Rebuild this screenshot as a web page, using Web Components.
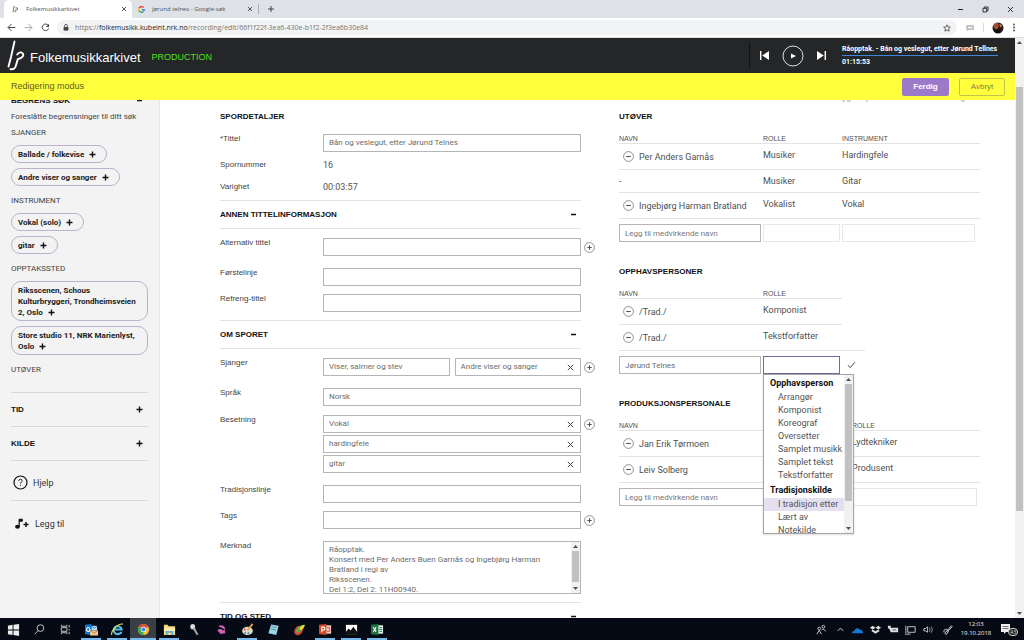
<!DOCTYPE html>
<html lang="nb">
<head>
<meta charset="utf-8">
<title>Folkemusikkarkivet</title>
<style>
html,body{margin:0;height:100%}
body{overflow:hidden;background:#fff;color:#444;font:8px/10px Roboto,"Liberation Sans",sans-serif}
</style>
</head>
<body>
<desktop-shell>
  <browser-tabs slot="top"></browser-tabs>
  <address-bar slot="top"></address-bar>
  <site-header slot="page"></site-header>
  <edit-bar slot="page"></edit-bar>
  <record-page slot="page"></record-page>
  <scroll-rail slot="rail" style="--before:40px;--thumb:424px"></scroll-rail>
  <task-bar slot="bottom"></task-bar>
</desktop-shell>

<script>
const base = `*{box-sizing:border-box}button{font:inherit;color:inherit;background:none;border:0;padding:0;margin:0;display:block}svg{display:block;flex:none}input,textarea{font:inherit;border-radius:0;outline:0}`;
function define(name, css, html, setup) {
  customElements.define(name, class extends HTMLElement {
    connectedCallback() {
      if (this.shadowRoot) return;
      const root = this.attachShadow({mode: 'open'});
      const body = typeof html === 'function' ? html(this) : html;
      root.innerHTML = `<style>${base}${css}</style>${body}`;
      if (setup) setup(root, this);
    }
  });
}
const attr = (el, n) => el.getAttribute(n) || '';
const plusSvg = '<svg width="7" height="7" viewBox="0 0 7 7" aria-hidden="true"><path d="M3.5 .5v6M.5 3.5h6" stroke="#111" stroke-width="1.4"/></svg>';
const minusSvg = '<svg width="7" height="7" viewBox="0 0 7 7" aria-hidden="true"><path d="M1 3.5h5" stroke="#111" stroke-width="1.5"/></svg>';
const circle = d => `<svg width="11" height="11" viewBox="0 0 11 11" aria-hidden="true"><circle cx="5.5" cy="5.5" r="4.9" fill="none" stroke="#777" stroke-width=".8"/><path d="${d}" stroke="#555" stroke-width="1.1"/></svg>`;
const circlePlus = circle('M5.5 3.3v4.4M3.3 5.5h4.4');
const circleMinus = circle('M3.2 5.5h4.6');

/* Frame: browser chrome on top, page with scroll rail, task bar below */
define('desktop-shell', `
:host{display:flex;flex-direction:column;height:100vh;min-height:0}
.view{flex:1;display:flex;min-height:0}
.page{flex:1;min-width:0;display:flex;flex-direction:column}
`, `<slot name="top"></slot><div class="view"><div class="page"><slot name="page"></slot></div><slot name="rail"></slot></div><slot name="bottom"></slot>`);

define('scroll-rail', `
:host{display:flex;flex-direction:column;width:9px;flex:none;background:#f1f1f1;justify-content:space-between}
.track{flex:1;padding-top:var(--before,0)}
.thumb{height:var(--thumb);background:#c1c1c1;margin:0 1px}
svg{margin:2px auto}
`, `<svg width="5" height="5" viewBox="0 0 5 5"><path d="M0 4l2.5-3L5 4z" fill="#505050"/></svg><div class="track"><div class="thumb"></div></div><svg width="5" height="5" viewBox="0 0 5 5"><path d="M0 1l2.5 3L5 1z" fill="#505050"/></svg>`);

define('browser-tabs', `
:host{display:flex;height:18px;background:#dee1e6;font:6px/18px "Open Sans",sans-serif;color:#4d5156;padding-left:4px}
.tab{display:flex;align-items:center;gap:7px;width:128px;padding:0 5px 0 8px}
.tab.on{background:#fff;border-radius:5px 5px 0 0}
.tab span{flex:1;white-space:nowrap}
.second{width:127px;border-right:1px solid #a9acb1;margin:4px 0;padding-left:6px}
.add{margin-left:8px;align-self:center}
.win{margin-left:auto;display:flex;align-items:center;gap:18px;padding-right:10px}
`, `<div class="tab on"><svg width="7" height="8" viewBox="0 0 7 8"><path d="M2.2.8L1 7.2M3.4 2.8q2.6-.4 2.2 1.2t-2 1l-.8 2.4" fill="none" stroke="#777" stroke-width="1"/></svg><span>Folkemusikkarkivet</span><button aria-label="Lukk fane"><svg width="6" height="6" viewBox="0 0 6 6"><path d="M1 1l4 4M5 1L1 5" stroke="#444" stroke-width=".9"/></svg></button></div>
<div class="tab second"><svg width="7" height="7" viewBox="0 0 8 8" fill="none" stroke-width="1.5"><path d="M6.4 1.8A3.2 3.2 0 0 0 1.2 2.6" stroke="#ea4335"/><path d="M1.2 2.6a3.2 3.2 0 0 0 0 2.8" stroke="#fbbc05"/><path d="M1.2 5.4a3.2 3.2 0 0 0 5 .9" stroke="#34a853"/><path d="M6.2 6.3Q7.2 5.4 7.2 4.1H4.2" stroke="#4285f4"/></svg><span>jørund telnes - Google-søk</span><button aria-label="Lukk fane"><svg width="6" height="6" viewBox="0 0 6 6"><path d="M1 1l4 4M5 1L1 5" stroke="#444" stroke-width=".9"/></svg></button></div>
<button class="add" aria-label="Ny fane"><svg width="8" height="8" viewBox="0 0 8 8"><path d="M4 1v6M1 4h6" stroke="#444"/></svg></button>
<div class="win"><button aria-label="Minimer"><svg width="7" height="7" viewBox="0 0 7 7"><path d="M1 3.5h5" stroke="#222"/></svg></button><button aria-label="Gjenopprett"><svg width="7" height="7" viewBox="0 0 7 7" fill="none" stroke="#222" stroke-width=".9"><path d="M1 2.3h3.7V6H1zM2.3 2.2V1H6v3.7H4.8"/></svg></button><button aria-label="Lukk"><svg width="7" height="7" viewBox="0 0 7 7"><path d="M1 1l5 5M6 1L1 6" stroke="#222" stroke-width=".9"/></svg></button></div>`);

define('address-bar', `
:host{display:flex;box-sizing:border-box;align-items:center;height:20px;background:#fff;padding:0 8px 0 7px;border-bottom:1px solid #ddd}
.nav{display:flex;gap:8px;margin-right:7px}
.url{flex:1;display:flex;align-items:center;gap:6px;height:15px;border-radius:8px;background:#f1f3f4;padding:0 6px;color:#777;font:7px/15px "Open Sans",sans-serif;white-space:nowrap}
.url b{font-weight:400;color:#222}.url span{flex:1}
.tools{display:flex;align-items:center;gap:8px;margin-left:8px}
.line{width:1px;height:9px;background:#d5dbe3}
`, `<div class="nav">
<button aria-label="Tilbake"><svg width="9" height="9" viewBox="0 0 9 9" fill="none" stroke="#444"><path d="M8.3 4.5H1.2M4.5 1L1 4.5 4.5 8"/></svg></button>
<button aria-label="Frem"><svg width="9" height="9" viewBox="0 0 9 9" fill="none" stroke="#aaa"><path d="M.7 4.5h7.1M4.5 1L8 4.5 4.5 8"/></svg></button>
<button aria-label="Last inn på nytt"><svg width="9" height="9" viewBox="0 0 9 9"><path d="M7.4 2.6A3.3 3.3 0 1 0 7.7 5.4" fill="none" stroke="#444"/><path d="M8 .8v3.1H4.9z" fill="#444"/></svg></button></div>
<div class="url"><svg width="6" height="7" viewBox="0 0 6 7"><path d="M.6 3h4.8v3.6H.6z" fill="#444"/><path d="M1.6 3V1.8a1.4 1.4 0 0 1 2.8 0V3" fill="none" stroke="#444" stroke-width=".8"/></svg><span>https://<b>folkemusikk.kubeint.nrk.no</b>/recording/edit/66f1f22f-3ea6-430e-b1f2-2f3ea6b30e84</span>
<button aria-label="Bokmerke"><svg width="8" height="8" viewBox="0 0 10 10"><path d="M5 1l1.2 2.7 3 .3-2.3 2 .7 3L5 7.5 2.4 9l.7-3L.8 4l3-.3z" fill="none" stroke="#444"/></svg></button></div>
<div class="tools"><svg width="10" height="8" viewBox="0 0 10 8"><path d="M1 2q0-1 1-1h6q1 0 1 1v3q0 1-1 1H4L2 7.5V6Q1 6 1 5z" fill="#c4c4c4"/><path d="M3 3.5h4" stroke="#fff"/></svg><span class="line"></span><svg width="12" height="12" viewBox="0 0 12 12"><circle cx="6" cy="6" r="5.5" fill="#2b1710"/><path d="M1 4q2-4 5-3l1 4-3 3z" fill="#a5532f"/><path d="M7 2l3 1-1 3z" fill="#c98a63"/><path d="M2 8l5-1 1 4H5z" fill="#0c0c10"/></svg><button aria-label="Meny"><svg width="4" height="9" viewBox="0 0 4 9" fill="#444"><circle cx="2" cy="1.5" r=".9"/><circle cx="2" cy="4.5" r=".9"/><circle cx="2" cy="7.5" r=".9"/></svg></button></div>`);

define('site-header', `
:host{display:flex;align-items:center;height:35px;flex:none;background:#252628;color:#fff;padding:0 17px 0 7px}
a{display:flex;align-items:center;gap:5px;color:inherit;text-decoration:none;font:13px/35px "Liberation Sans",sans-serif}
a span{padding-top:4px}
.env{margin-left:11px;padding-top:3px;color:#4ee01c;font:9px/35px "Liberation Sans",sans-serif}
.player{margin-left:auto;display:flex;align-items:center;gap:12px;height:27px;border-left:1px solid #111;padding-left:9px}
.now{width:156px;margin-left:3px;font:700 7px/11px Roboto,sans-serif;white-space:nowrap}
.now p{margin:0}.now p:first-child{border-bottom:1px solid #3f86d8}.now p:last-child{padding-top:1px}
`, `<a href="#"><svg width="18" height="31" viewBox="0 0 18 31" fill="none" stroke="#fff" stroke-width="1.9" stroke-linecap="round" stroke-linejoin="round"><path d="M7.5 1.5L4 17 1.500 26.500"/><path d="M10.2 14.500Q12 11.800 14.500 12.500 17.200 13.800 15.800 16.300 14.200 18.400 10.800 19.200L8.600 26.500Q7.300 29.800 3.500 29.200"/></svg><span>Folkemusikkarkivet</span></a><span class="env">PRODUCTION</span>
<div class="player"><button aria-label="Forrige"><svg width="11" height="11" viewBox="0 0 11 11" fill="#fff"><path d="M1 1h1.4v9H1zM10 1v9L3.2 5.5z"/></svg></button>
<button aria-label="Spill av"><svg width="22" height="22" viewBox="0 0 22 22"><circle cx="11" cy="11" r="10" fill="none" stroke="#ddd"/><path d="M9 8.400v5.200L14 11z" fill="#fff"/></svg></button>
<button aria-label="Neste"><svg width="11" height="11" viewBox="0 0 11 11" fill="#fff"><path d="M8.600 1H10v9H8.600zM1 1v9l6.800-4.500z"/></svg></button>
<div class="now"><p>Råopptak. - Bån og veslegut, etter Jørund Tellnes</p><p>01:15:53</p></div></div>`);

define('edit-bar', `
:host{display:flex;align-items:center;height:27px;flex:none;background:#ffff3e;color:#5e5e20;padding:0 10px 0 11px;font:9px/17px "Liberation Sans",sans-serif}
span{flex:1}
button{height:18px;width:47px;border-radius:2px;border:1px solid #9b7bc9;background:#9b7bc9;color:#fff;font:700 8px/16px "Liberation Sans",sans-serif}
button+button{margin-left:10px;background:none;border-color:#c2c24a;color:#84843a;font-weight:400;width:46px}
`, `<span>Redigering modus</span><button>Ferdig</button><button>Avbryt</button>`);

define('record-page', `
:host{display:flex;flex:1;min-height:0;overflow:hidden}
main{flex:1;min-width:0;padding:11px 35px 0 60px;display:grid;grid-template-columns:minmax(0,376fr) minmax(0,361fr);gap:23px;align-items:start;position:relative}
.cut{position:absolute;top:0;right:20px;width:153px;height:2px}
`, `<filter-panel></filter-panel><main>
<svg class="cut" viewBox="0 0 153 2" aria-hidden="true"><path d="M0 1h3M5 1h4M24 1h2M119 1h4" stroke="#aaa"/></svg>
<div>
<section-title>Spordetaljer</section-title>
<form-row label="*Tittel" values="Bån og veslegut, etter Jørund Telnes" gap="12"></form-row>
<form-row label="Spornummer" text="16" gap="8"></form-row>
<form-row label="Varighet" text="00:03:57" gap="12"></form-row>
<section-title fold>Annen tittelinformasjon</section-title>
<form-row label="Alternativ tittel" values="" plus gap="9"></form-row>
<form-row label="Førstelinje" values="" gap="12"></form-row>
<form-row label="Refreng-tittel" values="" gap="8"></form-row>
<section-title fold>Om sporet</section-title>
<form-row label="Sjanger" values="Viser, salmer og stev|Andre viser og sanger×" side plus gap="9"></form-row>
<form-row label="Språk" values="Norsk" gap="12"></form-row>
<form-row label="Besetning" values="Vokal×|hardingfele×|gitar×" plus gap="9"></form-row>
<form-row label="Tradisjonslinje" values="" gap="12"></form-row>
<form-row label="Tags" values="" plus gap="8"></form-row>
<form-row label="Merknad" area gap="12">Råopptak.
Konsert med Per Anders Buen Garnås og Ingebjørg Harman Bratland i regi av
Riksscenen.
Del 1:2, Del 2: 11H00940.</form-row>
<section-title fold>Tid og sted</section-title>
</div>
<div>
<section-title>Utøver</section-title>
<credit-table kind="trio" heads="Navn|Rolle|Instrument" rows="Per Anders Garnås|Musiker|Hardingfele;-|Musiker|Gitar;Ingebjørg Harman Bratland|Vokalist|Vokal"></credit-table>
<section-title later>Opphavspersoner</section-title>
<credit-table kind="pick" heads="Navn|Rolle" rows="/Trad./|Komponist;/Trad./|Tekstforfatter"></credit-table>
<section-title later>Produksjonspersonale</section-title>
<credit-table kind="duo" heads="Navn|Rolle" rows="Jan Erik Tørmoen|Lydtekniker;Leiv Solberg|Produsent"></credit-table>
</div></main>`);

define('filter-panel', `
:host{display:block;box-sizing:border-box;width:160px;flex:none;background:#f3f3f3;border-right:1px solid #e6e6e6;padding:0 11px}
h2,h3,p{margin:0;font-weight:400}
.top{margin-top:-5px}
.bar{display:flex;justify-content:space-between;align-items:center;padding-right:5px}
h2{font:700 8px/11px "Liberation Sans",sans-serif;color:#111;text-transform:uppercase}
.note{margin-top:6px}
.note,h3{color:#444;font:8px/10px Roboto,sans-serif}
h3{text-transform:uppercase;margin-top:6px}
.chips+h3{margin-top:10px}
.chips{display:flex;flex-direction:column;align-items:flex-start;gap:5px;margin-top:7px}
.rule{border-top:1px solid #d9d9d9;padding:11px 5px 11px 0}
.rule.first{margin-top:17px}
.link{display:flex;align-items:center;gap:5px;border-top:1px solid #d9d9d9;height:40px;padding:4px 0 0 2px;color:#333;text-decoration:none;font:9px/10px Roboto,sans-serif}
.link+.link{height:46px;padding-top:1px}
`, `<div class="bar top"><h2>Begrens søk</h2><button aria-label="Skjul">${minusSvg}</button></div>
<p class="note">Foreslåtte begrensninger til ditt søk</p>
<h3>Sjanger</h3><div class="chips"><filter-chip>Ballade / folkevise</filter-chip><filter-chip>Andre viser og sanger</filter-chip></div>
<h3>Instrument</h3><div class="chips"><filter-chip>Vokal (solo)</filter-chip><filter-chip>gitar</filter-chip></div>
<h3>Opptakssted</h3><div class="chips"><filter-chip>Riksscenen, Schous Kulturbryggeri, Trondheimsveien 2, Oslo</filter-chip><filter-chip>Store studio 11, NRK Marienlyst, Oslo</filter-chip></div>
<h3>Utøver</h3>
<div class="bar rule first"><h2>Tid</h2><button aria-label="Vis">${plusSvg}</button></div>
<div class="bar rule"><h2>Kilde</h2><button aria-label="Vis">${plusSvg}</button></div>
<a class="link" href="#"><svg width="15" height="15" viewBox="0 0 15 15" fill="none" stroke="#111"><circle cx="7.500" cy="7.500" r="6.500" stroke-width="1.200"/><path d="M5.700 6q.1-1.800 1.800-1.800T9.200 5.900q0 .8-.9 1.300-.8.500-.8 1.400M7.500 9.800v1.100" stroke-width=".9"/></svg>Hjelp</a>
<a class="link" href="#"><svg width="17" height="12" viewBox="0 0 17 12"><ellipse cx="4.500" cy="8.800" rx="2.400" ry="2" fill="#111"/><path d="M6.100 9V1.200h3.200v2H6.900" fill="#111" stroke="#111"/><path d="M13 4v5M10.500 6.500h5" stroke="#111" stroke-width="1.400"/></svg>Legg til</a>`);

define('filter-chip', `
:host{display:block;max-width:100%}
button{border:1px solid #b9b3cf;border-radius:10px;padding:3px 10px 2px 6px;text-align:left;color:#222;font:700 8px/11px Roboto,sans-serif}
svg{display:inline-block;vertical-align:-1px;margin-left:5px}
`, `<button><slot></slot>${plusSvg}</button>`);

define('section-title', `
:host{display:block}
:host([later]){margin-top:24px}
div{display:flex;justify-content:space-between;align-items:center}
:host([fold]) div{margin:8px 15px 0 0;padding:8px 4px 8px 0;border:solid #e3e3e3;border-width:1px 0}
h2{margin:0;text-transform:uppercase;color:#111;font:700 8px/11px "Liberation Sans",sans-serif}
`, el => `<div><h2><slot></slot></h2>${el.hasAttribute('fold') ? `<button aria-label="Skjul">${minusSvg}</button>` : ''}</div>`);

define('form-row', `
:host{display:block}
.row{display:grid;grid-template-columns:103px minmax(0,1fr) 12px;column-gap:0;align-items:start}
label,.name{color:#444;font:8px/10px "Liberation Sans",sans-serif}
.val{font:9px/10px Roboto,sans-serif;color:#555}
.fields{display:grid;gap:2px;margin-right:3px}
.side{grid-template-columns:1fr 1fr;gap:5px}
.field{display:flex;align-items:center;height:18px;border:1px solid #b5b5b5;background:#fff;padding:0 6px 0 5px}
input{flex:1;min-width:0;width:100%;border:0;padding:0;background:none;color:#6c6c6c}
.more{margin-top:4px}
.area{display:flex;height:53px;border:1px solid #b5b5b5}
textarea{flex:1;min-width:0;border:0;resize:none;overflow:hidden;padding:3px 0 0 5px;height:51px;color:#6c6c6c;line-height:10px}
`, el => {
  const label = attr(el, 'label');
  let body, forId = 'f0';
  if (el.hasAttribute('text')) body = `<span class="val">${attr(el, 'text')}</span>`;
  else if (el.hasAttribute('area')) body = `<div class="fields"><div class="area"><textarea id="f0">${el.textContent}</textarea><scroll-rail style="--thumb:31px"></scroll-rail></div></div>`;
  else body = `<div class="fields ${el.hasAttribute('side') ? 'side' : ''}">` + attr(el, 'values').split('|').map((v, i) => {
    const gone = v.endsWith('×');
    return `<div class="field"><input id="f${i}" aria-label="${label}" value="${v.replace('×', '')}">${gone ? '<button aria-label="Fjern"><svg width="7" height="7" viewBox="0 0 7 7"><path d="M.8.8l5.400 5.400M6.200.8L.8 6.200" stroke="#444"/></svg></button>' : ''}</div>`;
  }).join('') + '</div>';
  const name = el.hasAttribute('text') ? `<span class="name">${label}</span>` : `<label for="${forId}">${label}</label>`;
  const more = el.hasAttribute('plus') ? `<button class="more" aria-label="Legg til felt">${circlePlus}</button>` : '';
  return `<div class="row" style="margin-top:${attr(el, 'gap')}px">${name}${body}${more}</div>`;
});

define('credit-table', `
:host{display:block;margin-top:12px}
table{width:100%;border-spacing:0;table-layout:fixed;color:#505050;font:9px/10px Roboto,sans-serif}
th{height:10px;padding:0;text-align:left;font:400 7px/9px "Liberation Sans",sans-serif;text-transform:uppercase;border-bottom:1px solid #e3e3e3}
td{height:26px;padding:6px 0 0;vertical-align:top;border-bottom:1px solid #e3e3e3}
tr.plain td{height:23px}
tr:last-child td{height:25px;border:0}
.who{display:flex;align-items:center;gap:5px;padding:0 0 0 4px;height:13px}
.plain .who{padding:0;height:10px}
.c0{width:144px}.c1{width:79px}
.duo .c0{width:233px}.duo .c1{width:auto}
.pick table{width:223px}
.new{display:grid;grid-template-columns:142px 77px minmax(0,133px);gap:2px;border-top:1px solid #e3e3e3;padding-top:5px;position:relative}
.duo .new{grid-template-columns:231px minmax(0,125px)}
.pick .new{width:246px;grid-template-columns:142px 77px 25px}
input{height:18px;width:100%;border:1px solid #b5b5b5;padding:0 5px;color:#6c6c6c;font:8px/10px Roboto,sans-serif;background:#fff}
input::placeholder{color:#777;opacity:1}
input.off{border-color:#e8e8e8}
input.focus{border-color:#6e6b9c}
.ok{align-self:center;margin-left:5px}
role-menu{position:absolute;top:23px;left:144px}
`, el => {
  const kind = attr(el, 'kind');
  const heads = attr(el, 'heads').split('|').map((h, i) => `<th class="c${i}" scope="col">${h}</th>`).join('');
  const rows = attr(el, 'rows').split(';').map(r => {
    const [n, ...rest] = r.split('|');
    const plain = n === '-';
    return `<tr class="${plain ? 'plain' : ''}"><td><div class="who">${plain ? '' : `<button aria-label="Fjern">${circleMinus}</button>`}<span>${n}</span></div></td>${rest.map(c => `<td>${c}</td>`).join('')}</tr>`;
  }).join('');
  const form = {
    trio: '<input aria-label="Navn" placeholder="Legg til medvirkende navn"><input class="off" aria-label="Rolle" disabled><input class="off" aria-label="Instrument" disabled>',
    duo: '<input aria-label="Navn" placeholder="Legg til medvirkende navn"><input class="off" aria-label="Rolle" disabled>',
    pick: '<input aria-label="Navn" value="Jørund Telnes"><input class="focus" role="combobox" aria-expanded="true" aria-label="Rolle"><button class="ok" aria-label="Lagre"><svg width="9" height="8" viewBox="0 0 9 8"><path d="M1 4.200l2.200 2.400L8 1.200" fill="none" stroke="#444"/></svg></button><role-menu></role-menu>'
  }[kind];
  return `<div class="${kind}"><table><thead><tr>${heads}</tr></thead><tbody>${rows}</tbody></table><div class="new">${form}</div></div>`;
});

define('role-menu', `
:host{display:flex;box-sizing:border-box;z-index:2;width:91px;height:160px;border:1px solid #a5a5a5;background:#fff;box-shadow:0 1px 2px #0002;overflow:hidden;font:9px/13px Roboto,sans-serif;color:#555}
.list{flex:1;min-width:0;white-space:nowrap;overflow:hidden}
ul{list-style:none;margin:0;padding:0}
strong{display:block;padding-left:6px;color:#111;font:700 9px/16px Roboto,sans-serif}
li{padding-left:14px}
li[aria-selected]{background:#e4e0ef}
`, `<div class="list" role="listbox" aria-label="Rolle"><strong>Opphavsperson</strong><ul><li role="option">Arrangør</li><li role="option">Komponist</li><li role="option">Koreograf</li><li role="option">Oversetter</li><li role="option">Samplet musikk</li><li role="option">Samplet tekst</li><li role="option">Tekstforfatter</li></ul><strong>Tradisjonskilde</strong><ul><li role="option" aria-selected="true">I tradisjon etter</li><li role="option">Lært av</li><li role="option">Notekilde</li></ul></div><scroll-rail style="--thumb:117px"></scroll-rail>`);

const apps = [
 ['Start','<path d="M1 3l5-1v5H1zM7 2l6-1v6H7zM1 8h5v5l-5-1zM7 8h6v6l-6-1z" fill="#eee"/>'],
 ['Søk','<circle cx="8" cy="5.500" r="3.600" fill="none" stroke="#ccc"/><path d="M5.400 8.200L2 12" stroke="#ccc"/>'],
 ['Oppgavevisning','<path d="M2.500 5h6v4h-6zM2.500 2v1.500h6V2M2.500 12v-1.500h6V12" fill="none" stroke="#ccc"/><path d="M11 2v3M11 6.500v1.500M11 9.500V12" stroke="#ccc"/>'],
 ['Outlook','<path d="M0 2l7-1v12l-7-1z" fill="#1277cf"/><path d="M7 3h6v5H7z" fill="#bfe0f8"/><path d="M7 3l3 3 3-3" fill="none" stroke="#1277cf"/><ellipse cx="3.500" cy="7" rx="1.800" ry="2.200" fill="none" stroke="#fff" stroke-width="1.200"/><path d="M5.500 8H14v5.500H5.500z" fill="#f5c58a"/><path d="M5.500 8l4.200 3L14 8" fill="none" stroke="#b8702d" stroke-width=".8"/>',1],
 ['Internet Explorer','<path d="M11.200 9.500A4.300 4.300 0 1 1 11.500 7H4" fill="none" stroke="#4fc0f0" stroke-width="2.200"/><path d="M1 13Q-.5 10 4 5.200 9 .5 12.800 1.200" fill="none" stroke="#f4dc55" stroke-width="1.200"/>',1],
 ['Chrome','<circle cx="7" cy="7" r="6" fill="#f2c231"/><path d="M7 7L1.800 4A6 6 0 0 1 12.200 4z" fill="#e04a3f"/><path d="M7 7L1.800 4A6 6 0 0 0 7 13z" fill="#3aa757"/><circle cx="7" cy="7" r="2.900" fill="#fff"/><circle cx="7" cy="7" r="2.200" fill="#4285f4"/>',2],
 ['Utforsker','<path d="M1 2h4l1 1.500h7V13H1z" fill="#f4d878"/><path d="M1 5h12v4H1z" fill="#fbe9a6"/><path d="M3 8.500h8V13H9v-2.500H5V13H3z" fill="#58b0dd"/>',1],
 ['Mikrofon','<ellipse cx="4" cy="4" rx="2.600" ry="3" fill="#ddd"/><path d="M4 6l2.300-1.200L10 12.500l-1.600.8z" fill="#aaa"/>'],
 ['Musikk','<path d="M4 3q5-2 7 3l-1 1Q7 4 4 4zM2.500 8q3-3 6 0l2-1 .6 4-5 .8z" fill="#d55fae"/>'],
 ['Paint','<ellipse cx="7" cy="8.500" rx="5.800" ry="4.500" fill="#dcdccb"/><circle cx="4" cy="7" r="1" fill="#d84b3c"/><circle cx="4.500" cy="10.500" r="1" fill="#4b9d4b"/><circle cx="8" cy="11" r="1" fill="#3c72c9"/><path d="M7 8l5.500-7" stroke="#dba148" stroke-width="2"/>',1],
 ['Notisblokk','<path d="M4.500 1.500L12.500 3 10 13 1.500 11z" fill="#9fd3e2"/><path d="M5 4l5.500 1M4.300 6.500l5.500 1" stroke="#4a95a8"/>'],
 ['Maling','<ellipse cx="6" cy="8" rx="4.200" ry="5.500" transform="rotate(35 6 8)" fill="#d84837"/><path d="M3 9q3-7 9-7-2 6-7 9z" fill="#59b43f"/><path d="M7 6q2-4 6-4-1 4-4 6z" fill="#f1d43c"/>'],
 ['PowerPoint','<path d="M7 2.500h6v9H7z" fill="#f3d1c6"/><path d="M0 2l8-1v12l-8-1z" fill="#d24726"/><path d="M3 10V4.500h1.700a1.500 1.500 0 0 1 0 3.200H3" fill="none" stroke="#fff" stroke-width="1.200"/><path d="M8.500 5h3v4h-3" fill="none" stroke="#d24726"/>',1],
 ['Bilder','<path d="M1 2h12v10H1z" fill="#fff"/><path d="M1 12V9.500l3-3.500 2 2 3-4 4 5.500V12z" fill="#111"/>',1],
 ['Excel','<path d="M7 2.500h6v9H7z" fill="#e4f3ea"/><path d="M9 5h3M9 7h3M9 9h3" stroke="#217346"/><path d="M0 2l8-1v12l-8-1z" fill="#217346"/><path d="M2.500 4.500l3 5M5.500 4.500l-3 5" stroke="#fff" stroke-width="1.200"/>',1]
];
const tray = [
 [21,'<path d="M2 12l2.500-4L7 12" fill="none" stroke="#ccc"/><circle cx="4.500" cy="6" r="1.500" fill="none" stroke="#ccc"/><circle cx="9" cy="4" r="1.500" fill="none" stroke="#ccc"/><path d="M7 8q2-3 4.500 1" fill="none" stroke="#ccc"/>'],
 [17,'<path d="M4 8.500L7 5.500l3 3" fill="none" stroke="#ddd"/>'],
 [17,'<path d="M1 11q0-2.500 2.500-2.500Q5 4.500 8 6l1 1q3.500-.5 4 4z" fill="#1b77d2"/>'],
 [18,'<path d="M4 3l3 2-3 2-3-2zM10 3l3 2-3 2-3-2zM4 7l3 2 3-2 1.500 1.500L7 11.500 2.500 8.500z" fill="#ddd"/>'],
 [18,'<path d="M2 5h10v5H4zM1 3h3v3H1z" fill="#ddd"/><path d="M6 7.500h4" stroke="#555"/>'],
 [17,'<path d="M4 4h8v6H4zM2 3v8M1 12h6" fill="none" stroke="#ccc"/>'],
 [19,'<path d="M2 6h2l2-2v6L4 8.500H2z" fill="none" stroke="#ddd" stroke-width=".9"/><path d="M8 5q1.500 2 0 4.500M10 4q2.500 3 0 6.500" fill="none" stroke="#999"/>'],
 [20,'<path d="M2 10q0-4 3-3t1 4-3 0L10 3l1 1-5 5" fill="none" stroke="#ddd"/>']
];
define('task-bar', `
:host{display:flex;height:22px;flex:none;background:#050a14;color:#ddd}
.app{width:26px;height:22px;display:grid;place-items:center;border-bottom:0}
.run{background:linear-gradient(#76b9ed,#76b9ed) center bottom/20px 2px no-repeat}
.on{background:linear-gradient(#76b9ed,#76b9ed) center bottom/100% 2px no-repeat #3a3e47}
.tray{margin-left:auto;display:flex;align-items:center}
.tray span{display:grid;place-items:center}
time{width:36px;text-align:center;font:6px/9px "Open Sans",sans-serif;color:#eee}
.note{position:relative;margin:0 10px 0 6px}
.badge{position:absolute;right:-4px;bottom:0;border-radius:5px;border:1px solid #ccc;font:5px/6px "Open Sans",sans-serif;padding:0 1px;background:#222}
`, () => apps.map(([n, d, s]) => `<button class="app ${s === 2 ? 'on' : s ? 'run' : ''}" aria-label="${n}"><svg width="13" height="13" viewBox="0 0 14 14">${d}</svg></button>`).join('') +
`<div class="tray">${tray.map(([w, d]) => `<span style="width:${w}px"><svg width="13" height="13" viewBox="0 0 14 14">${d}</svg></span>`).join('')}<time>12:03<br>19.10.2018</time><button class="note" aria-label="Varslinger"><svg width="14" height="14" viewBox="0 0 14 14"><path d="M1 2h9v8H6l-2 2v-2H1z" fill="#eee"/><path d="M2.500 4.500h6M2.500 6.500h6" stroke="#555" stroke-width=".8"/></svg><span class="badge">43</span></button></div>`);
</script>
</body>
</html>
